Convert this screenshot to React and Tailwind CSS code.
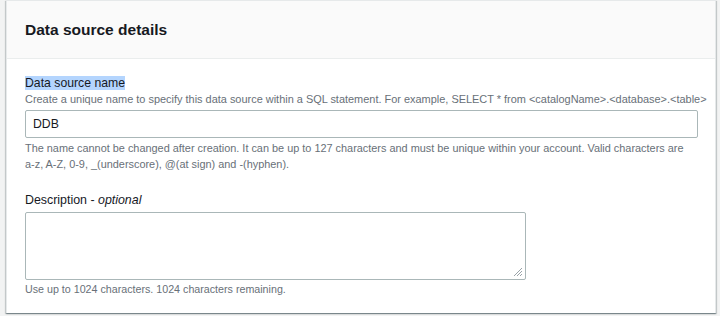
export default function App() {
  const font = { fontFamily: '"Liberation Sans", Arial, sans-serif' };
  return (
    <div className="h-[316px] w-[720px] bg-[#f2f3f3] pl-[6px] pr-[4px] pb-[3px]" style={font}>
      <div className="h-[313px] bg-white border-t border-x border-[#e6e9ea] shadow-[0_1px_1px_0_rgba(0,28,36,0.3),1px_1px_1px_0_rgba(0,28,36,0.15),-1px_1px_1px_0_rgba(0,28,36,0.15)]">
        <div className="h-[58px] bg-[#fafafa] border-b border-[#eaeded] px-[18px] flex items-center">
          <h2 className="text-[15.5px] font-bold text-[#16191f] leading-[20px]">Data source details</h2>
        </div>
        <div className="px-[18px] pt-[16px]">
          <div className="text-[12.25px] leading-[16px] text-[#16191f]">
            <span className="bg-[#b4d5fe]">Data source name</span>
          </div>
          <div className="text-[10.95px] leading-[16px] text-[#687078] whitespace-nowrap">
            Create a unique name to specify this data source within a SQL statement. For example, SELECT * from &lt;catalogName&gt;.&lt;database&gt;.&lt;table&gt;
          </div>
          <div className="mt-[3px] h-[28px] w-[673px] border border-[#aab7b8] rounded-[2px] flex items-center px-[7px] text-[12.25px] text-[#16191f]">
            DDB
          </div>
          <div className="mt-[2px] w-[662px] text-[10.9px] leading-[16px] text-[#687078]">
            The name cannot be changed after creation. It can be up to 127 characters and must be unique within your account. Valid characters are a-z, A-Z, 0-9, _(underscore), @(at sign) and -(hyphen).
          </div>
          <div className="mt-[20px] text-[12.4px] leading-[16px] text-[#16191f]">
            Description - <i>optional</i>
          </div>
          <div className="relative mt-[4px] h-[68px] w-[501px] border border-[#aab7b8] rounded-[2px]">
            <svg className="absolute right-[2px] bottom-[2px]" width="10" height="10" viewBox="0 0 10 10">
              <path d="M9 1L1 9M9 4L4 9M9 7L7 9" stroke="#9aa3a8" strokeWidth="1" fill="none" />
            </svg>
          </div>
          <div className="mt-[1px] text-[10.7px] leading-[16px] text-[#687078]">
            Use up to 1024 characters. 1024 characters remaining.
          </div>
        </div>
      </div>
    </div>
  );
}
